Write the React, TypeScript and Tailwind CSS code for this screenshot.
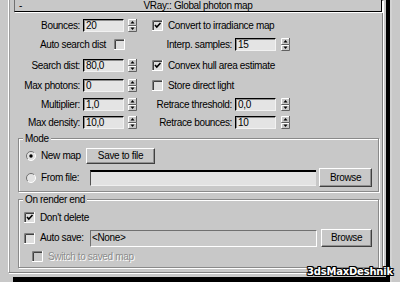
import React from "react";

function Spinner({ gap }: { gap: string }) {
  return (
    <svg className={gap} width="9" height="13" viewBox="0 0 9 13">
      <rect x="0" y="0" width="9" height="13" fill="#c8c8c8" />
      <path d="M0.5 6V0.5H8" stroke="#fff" fill="none" />
      <path d="M0.5 6.5H8.5V0" stroke="#606060" fill="none" />
      <path d="M0.5 12V7.5H8" stroke="#fff" fill="none" />
      <path d="M0.5 12.5H8.5V7" stroke="#606060" fill="none" />
      <path d="M4.5 2L2.5 4.5H6.5Z" fill="#000" />
      <path d="M2.5 8.5H6.5L4.5 11Z" fill="#000" />
    </svg>
  );
}

function Field({ value }: { value: string }) {
  return (
    <div className="ml-[3px] w-[41px] h-[13px] bg-[#e4e4e4] border-t border-l border-t-black border-l-black border-b border-r border-b-[#f2f2f2] border-r-[#f2f2f2] shadow-[inset_1px_1px_0_#8c8c8c] flex items-center pl-[2px]">
      {value}
    </div>
  );
}

function Check({ checked, disabled }: { checked?: boolean; disabled?: boolean }) {
  return (
    <svg width="11" height="11" viewBox="0 0 11 11" className="shrink-0">
      <rect x="0" y="0" width="11" height="11" fill={disabled ? "#c8c8c8" : "#dedede"} />
      <path d="M0.5 11V0.5H11" stroke="#808080" fill="none" />
      <path d="M1.5 10V1.5H10" stroke="#404040" fill="none" />
      <path d="M0 10.5H10.5V0" stroke="#fff" fill="none" />
      {checked && <path d="M3 5L4.8 7L8.5 3" stroke="#000" strokeWidth="1.6" fill="none" />}
    </svg>
  );
}

function Radio({ on }: { on?: boolean }) {
  return (
    <svg width="10" height="10" viewBox="0 0 10 10" className="shrink-0">
      <circle cx="5" cy="5" r="4.5" fill="#e2e2e2" />
      <path d="M1.8 8.2A4.5 4.5 0 0 1 8.2 1.8" stroke="#707070" fill="none" />
      <path d="M8.2 1.8A4.5 4.5 0 0 1 1.8 8.2" stroke="#fff" fill="none" />
      {on && <circle cx="5" cy="5" r="1.7" fill="#000" />}
    </svg>
  );
}

function Button({ label, w, h }: { label: string; w: string; h: string }) {
  return (
    <div
      className={`${w} ${h} bg-[#c8c8c8] border border-t-white border-l-white border-b-[#404040] border-r-[#404040] shadow-[inset_-1px_-1px_0_#909090] flex items-center justify-center`}
    >
      {label}
    </div>
  );
}

function SpinLeft({ label, value }: { label: string; value: string }) {
  return (
    <div className="w-[143px] flex items-center">
      <span className="w-[71px] text-right">{label}</span>
      <Field value={value} />
      <Spinner gap="ml-[4px]" />
    </div>
  );
}

function SpinRight({ label, value }: { label: string; value: string }) {
  return (
    <div className="flex items-center">
      <span className="w-[80px] text-right">{label}</span>
      <Field value={value} />
      <Spinner gap="ml-[5px]" />
    </div>
  );
}

function CheckRight({ label, checked }: { label: string; checked?: boolean }) {
  return (
    <div className="flex items-center">
      <Check checked={checked} />
      <span className="ml-[5px]">{label}</span>
    </div>
  );
}

export default function App() {
  return (
    <div className="w-[400px] h-[282px] bg-[#c8c8c8] flex overflow-hidden relative font-['Liberation_Sans',Arial,sans-serif] text-[10px] tracking-[-0.35px] leading-none text-black select-none">
      <div className="w-[8px] shrink-0" />

      <div className="w-[378px] shrink-0 flex flex-col">
        <div className="w-[375px] border-l border-l-white border-r border-r-[#808080] border-b border-b-[#808080] shadow-[1px_1px_0_#fff,inset_1px_0_0_#9c9c9c] flex flex-col pb-[4px]">
          {/* rollout title */}
          <div className="ml-[5px] w-[368px] h-[12px] border-l border-l-[#707070] border-r border-r-black border-b border-b-black shadow-[1px_1px_0_#fff] flex items-center">
            <span className="w-[24px] pl-[4px]">-</span>
            <span className="flex-1 text-center">VRay:: Global photon map</span>
            <span className="w-[24px]" />
          </div>

          <div className="mt-[7px] h-[13px] flex items-center">
            <SpinLeft label="Bounces:" value="20" />
            <CheckRight label="Convert to irradiance map" checked />
          </div>
          <div className="mt-[6px] h-[13px] flex items-center">
            <div className="w-[143px] flex items-center">
              <span className="w-[97px] text-right">Auto search dist</span>
              <span className="ml-[8px]">
                <Check />
              </span>
            </div>
            <SpinRight label="Interp. samples:" value="15" />
          </div>
          <div className="mt-[8px] h-[13px] flex items-center">
            <SpinLeft label="Search dist:" value="80,0" />
            <CheckRight label="Convex hull area estimate" checked />
          </div>
          <div className="mt-[7px] h-[13px] flex items-center">
            <SpinLeft label="Max photons:" value="0" />
            <CheckRight label="Store direct light" />
          </div>
          <div className="mt-[6px] h-[13px] flex items-center">
            <SpinLeft label="Multiplier:" value="1,0" />
            <SpinRight label="Retrace threshold:" value="0,0" />
          </div>
          <div className="mt-[5px] h-[13px] flex items-center">
            <SpinLeft label="Max density:" value="10,0" />
            <SpinRight label="Retrace bounces:" value="10" />
          </div>

          {/* Mode */}
          <fieldset className="mt-[4px] ml-[9px] w-[361px] border border-[#8a8a8a] shadow-[inset_1px_1px_0_#fff,1px_1px_0_#fff] pb-[4px]">
            <legend className="ml-[4px] px-[2px] h-[11px] leading-[11px] bg-[#c8c8c8]">Mode</legend>
            <div className="mt-[4px] h-[16px] flex items-center pl-[7px]">
              <div className="w-[60px] flex items-center">
                <Radio on />
                <span className="ml-[5px]">New map</span>
              </div>
              <Button label="Save to file" w="w-[69px]" h="h-[16px]" />
            </div>
            <div className="mt-[4px] h-[19px] flex items-center pl-[7px]">
              <div className="w-[64px] flex items-center">
                <Radio />
                <span className="ml-[5px]">From file:</span>
              </div>
              <div className="w-[226px] h-[16px] bg-[#e2e2e2] border-t-2 border-t-black border-l border-l-[#505050] border-b border-b-[#efefef]" />
              <div className="ml-[3px]">
                <Button label="Browse" w="w-[53px]" h="h-[19px]" />
              </div>
            </div>
          </fieldset>

          {/* On render end */}
          <fieldset className="mt-[2px] ml-[9px] w-[361px] border border-[#8a8a8a] shadow-[inset_1px_1px_0_#fff,1px_1px_0_#fff] pb-[5px]">
            <legend className="ml-[4px] px-[2px] h-[11px] leading-[11px] bg-[#c8c8c8]">On render end</legend>
            <div className="mt-[7px] h-[11px] flex items-center pl-[5px]">
              <Check checked />
              <span className="ml-[5px]">Don't delete</span>
            </div>
            <div className="mt-[6px] h-[18px] flex items-center pl-[5px]">
              <div className="w-[66px] flex items-center">
                <Check />
                <span className="ml-[5px]">Auto save:</span>
              </div>
              <div className="w-[227px] h-[17px] bg-[#cacaca] border-t border-t-[#707070] border-l border-l-[#707070] border-b border-b-white border-r border-r-white flex items-center pl-[1px]">
                &lt;None&gt;
              </div>
              <div className="ml-[4px]">
                <Button label="Browse" w="w-[51px]" h="h-[18px]" />
              </div>
            </div>
            <div className="mt-[4px] h-[11px] flex items-center pl-[13px]">
              <Check disabled />
              <span className="ml-[5px] text-[#8c8c8c] [text-shadow:1px_1px_0_#fff]">Switch to saved map</span>
            </div>
          </fieldset>
        </div>

        <div className="mt-[4px] ml-[5px] flex-1 bg-black" />
      </div>

      <div className="w-[4px] shrink-0 bg-black" />
      <div className="flex-1 border-l-2 border-l-[#d2d2d2]" />

      <div className="absolute left-[307px] top-[267px] font-['DejaVu_Sans',sans-serif] font-bold text-[10px] tracking-[-0.2px] text-white [text-shadow:1px_0_0_#000,-1px_0_0_#000,0_1px_0_#000,0_-1px_0_#000,1px_1px_0_#000,-1px_-1px_0_#000,1px_-1px_0_#000,-1px_1px_0_#000]">
        3dsMaxDeshnik
      </div>
    </div>
  );
}
